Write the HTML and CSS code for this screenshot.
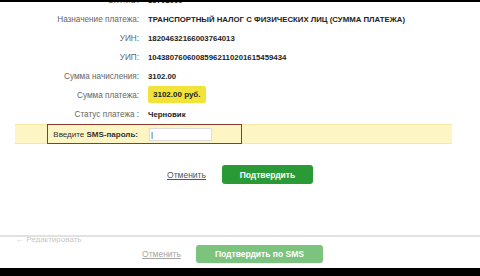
FILE: index.html
```html
<!DOCTYPE html>
<html>

<head>
    <title>Подтверждение платежа</title>
    <link rel="stylesheet" href="styles.css">
</head>

<body>
    <div class="screen">
        <div class="form">
            <div class="row">
                <span class="lbl">ОКТМО:</span>
                <span class="val">36701000</span>
            </div>
            <div class="row">
                <span class="lbl">Назначение платежа:</span>
                <span class="val">ТРАНСПОРТНЫЙ НАЛОГ С ФИЗИЧЕСКИХ ЛИЦ (СУММА ПЛАТЕЖА)</span>
            </div>
            <div class="row">
                <span class="lbl">УИН:</span>
                <span class="val">18204632166003764013</span>
            </div>
            <div class="row">
                <span class="lbl">УИП:</span>
                <span class="val">10438076060085962110201615459434</span>
            </div>
            <div class="row">
                <span class="lbl">Сумма начисления:</span>
                <span class="val">3102.00</span>
            </div>
            <div class="row">
                <span class="lbl">Сумма платежа:</span>
                <span class="val"><span class="sum">3102.00 руб.</span></span>
            </div>
            <div class="row">
                <span class="lbl">Статус платежа :</span>
                <span class="val">Черновик</span>
            </div>

            <div class="sms">
                <div class="smsBox">
                    <span class="smsLbl">Введите <b>SMS-пароль:</b></span>
                    <input class="smsInput" type="text" value="|">
                </div>
            </div>

            <div class="actions">
                <a href="#" class="link">Отменить</a>
                <button class="btn">Подтвердить</button>
            </div>
        </div>

        <div class="footer">
            <div class="back">&larr; Редактировать</div>
            <div class="actions footActions">
                <a href="#" class="link faded">Отменить</a>
                <button class="btn btnFaded">Подтвердить по SMS</button>
            </div>
        </div>
    </div>
</body>

</html>
```

FILE: styles.css
```css
body {
    margin: 0;
    background-color: #000;
    font-family: "Liberation Sans", Arial, sans-serif;
    font-size: 8px;
    color: #222;
}

.screen {
    margin-top: 2px;
    height: 266px;
    background-color: #fff;
    overflow: hidden;
    display: flex;
    flex-direction: column;
}

.form {
    flex: 1;
    margin-top: -11px;
}

.row {
    display: grid;
    grid-template-columns: 139px 1fr;
    column-gap: 9px;
    height: 19px;
    align-items: center;
}

.lbl {
    text-align: right;
    color: #666;
    font-size: 8.2px;
}

.val {
    font-weight: bold;
    font-size: 7.8px;
    color: #222;
}

.sum {
    display: inline-block;
    background-color: #f2e33a;
    padding: 4px 5px;
    border-radius: 2px;
    margin-top: -2px;
    font-size: 8px;
}

.sms {
    margin-left: 15px;
    width: 437px;
    height: 20px;
    background-color: #fdf5c4;
    box-shadow: inset 0 1px 0 #f6e7a4, inset 0 -1px 0 #f6e7a4;
}

.smsBox {
    margin-left: 32px;
    width: 193px;
    height: 18px;
    border: 1px solid #8a3b2c;
    display: grid;
    grid-template-columns: 90px 1fr;
    column-gap: 11px;
    align-items: center;
}

.smsLbl {
    text-align: right;
    color: #333;
}

.smsInput {
    width: 60px;
    height: 11px;
    padding: 0 0 0 1px;
    border: 1px solid #ddd;
    font-size: 8px;
    font-family: inherit;
    color: #333;
}

.actions {
    display: flex;
    justify-content: center;
    align-items: center;
    gap: 16px;
    margin-top: 21px;
}

.link {
    color: #4d5a4f;
    font-size: 8.5px;
}

.btn {
    height: 19px;
    padding: 0 12px;
    border: 0;
    border-radius: 3px;
    background-color: #2a9a37;
    color: #fff;
    font-family: inherit;
    font-size: 8.5px;
    font-weight: bold;
    min-width: 91px;
}

.footer {
    height: 31px;
    border-top: 2px solid #e2e2e2;
}

.back {
    padding-left: 16px;
    height: 6px;
    line-height: 5px;
    overflow: hidden;
    color: #c8c8c8;
    font-size: 8px;
}

.footActions {
    margin-top: 2px;
    gap: 15px;
    padding-right: 15px;
}

.faded {
    color: #a5a5a5;
}

.btnFaded {
    width: 127px;
    height: 18px;
    background-color: #7cc47e;
}
```
